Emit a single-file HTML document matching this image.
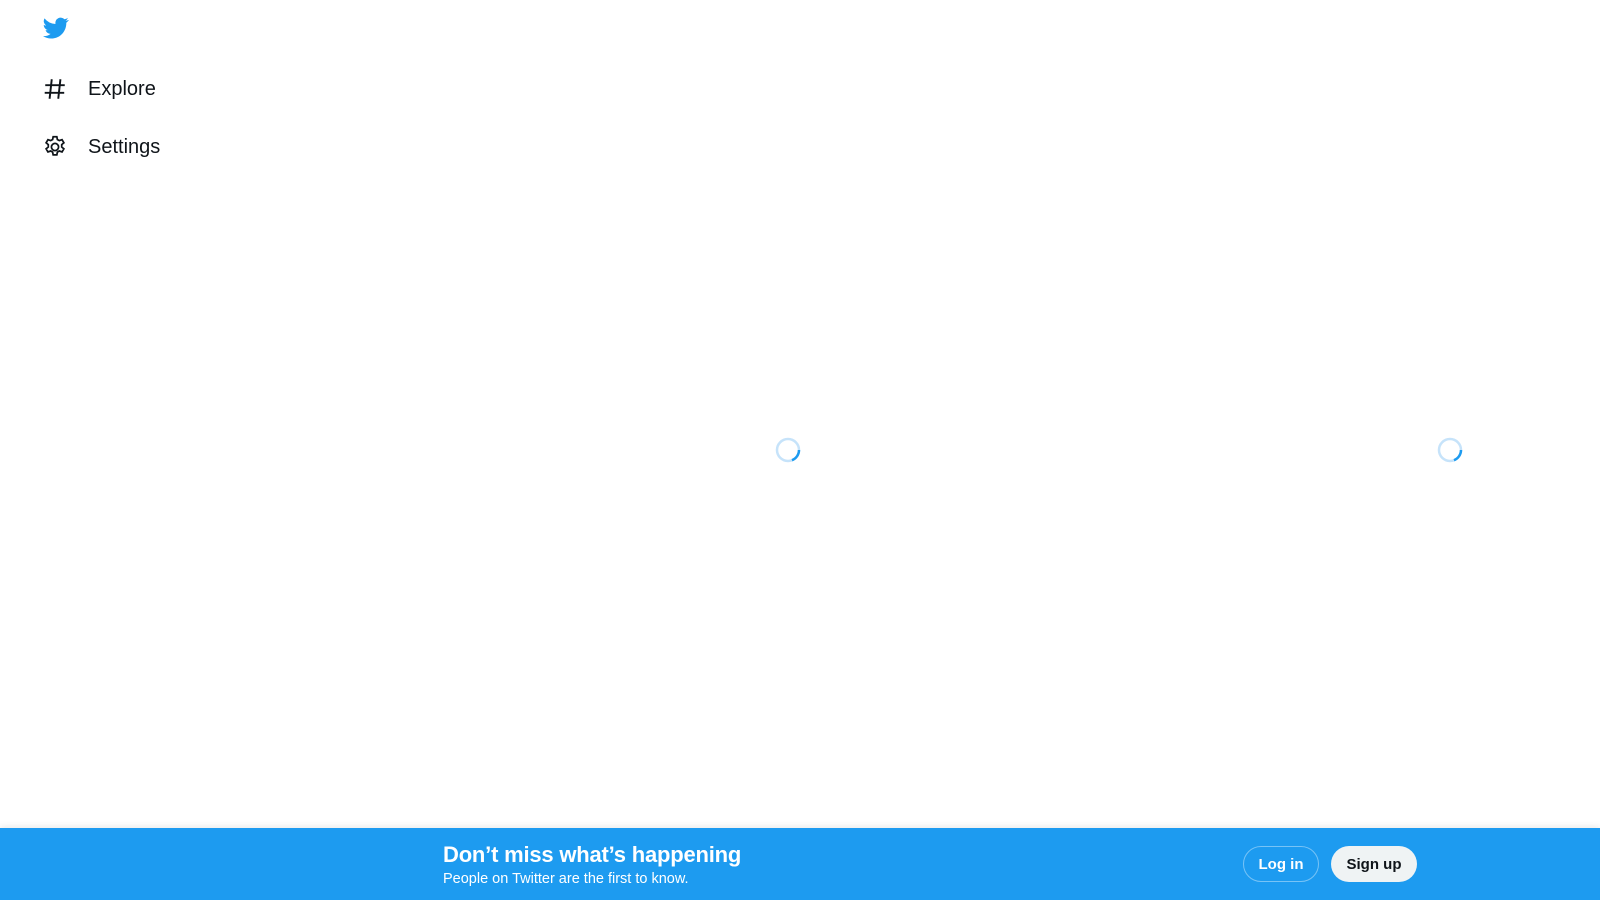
<!DOCTYPE html>
<html><head><style>
body{margin:0;width:1600px;height:900px;background:#fff;font-family:"Segoe UI","Liberation Sans",sans-serif;position:relative;overflow:hidden}
.nav{position:absolute;left:42px;font-size:20px;color:#0f1419;display:flex;align-items:center}
.nav svg{width:26px;height:26px;margin-right:20px}
.spin{position:absolute;width:26px;height:26px}
.bar{position:absolute;left:0;top:828px;width:1600px;height:72px;background:#1d9bf0;box-shadow:0 -2px 6px rgba(0,0,0,.08);color:#fff}
.t1{position:absolute;left:443px;top:14px;font-size:22px;font-weight:bold;letter-spacing:-0.2px}
.t2{position:absolute;left:443px;top:43px;font-size:14.5px}
.btn{position:absolute;top:18px;height:36px;border-radius:18px;box-sizing:border-box;font-size:15px;font-weight:bold;display:flex;align-items:center;justify-content:center}
</style></head><body>
<svg style="position:absolute;left:42px;top:15px;width:28px;height:26px" viewBox="0 0 24 24"><path fill="#1d9bf0" d="M23.6 4.6c-.9.4-1.8.6-2.8.8 1-.6 1.8-1.6 2.1-2.7-.9.6-2 1-3.1 1.2A4.9 4.9 0 0 0 11.5 8.3 13.9 13.9 0 0 1 1.4 3.1a4.9 4.9 0 0 0 1.5 6.6c-.8 0-1.600-.2-2.2-.6 0 2.4 1.7 4.4 3.9 4.8-.7.2-1.5.2-2.2.1.6 2 2.4 3.4 4.6 3.4A9.9 9.9 0 0 1 0 19.5 13.9 13.9 0 0 0 7.5 21.7c9.1 0 14-7.5 14-14v-.6c1-.7 1.8-1.6 2.4-2.5z"/></svg>
<div class="nav" style="top:76px"><svg viewBox="0 0 24 24" fill="none" stroke="#0f1419" stroke-width="1.8"><path d="M9 3 7 21M17 3l-2 18M3 8.5h18M2.5 15.5h18"/></svg>Explore</div>
<div class="nav" style="top:134px"><svg viewBox="0 0 24 24" fill="none" stroke="#0f1419" stroke-width="1.6"><circle cx="12" cy="12" r="3.3"/><path d="M10.3 2.5h3.4l.5 2.6 1.8 1 2.5-.9 1.7 2.9-2 1.7v2.2l2 1.7-1.7 2.9-2.5-.9-1.8 1-.5 2.6h-3.4l-.5-2.6-1.8-1-2.5.9-1.7-2.9 2-1.7v-2.2l-2-1.7 1.7-2.9 2.5.9 1.8-1z"/></svg>Settings</div>
<svg class="spin" style="left:775px;top:437px" viewBox="0 0 26 26"><circle cx="13" cy="13" r="11" fill="none" stroke="#c6e3fa" stroke-width="2.5"/><path d="M24 13A11 11 0 0 1 17 23.2" fill="none" stroke="#1d9bf0" stroke-width="2.5"/></svg>
<svg class="spin" style="left:1437px;top:437px" viewBox="0 0 26 26"><circle cx="13" cy="13" r="11" fill="none" stroke="#c6e3fa" stroke-width="2.5"/><path d="M24 13A11 11 0 0 1 17 23.2" fill="none" stroke="#1d9bf0" stroke-width="2.5"/></svg>
<div class="bar">
<div class="t1">Don’t miss what’s happening</div>
<div class="t2">People on Twitter are the first to know.</div>
<div class="btn" style="left:1243px;width:76px;border:1px solid rgba(255,255,255,.4)">Log in</div>
<div class="btn" style="left:1331px;width:86px;background:#eff3f4;color:#0f1419">Sign up</div>
</div>
</body></html>
